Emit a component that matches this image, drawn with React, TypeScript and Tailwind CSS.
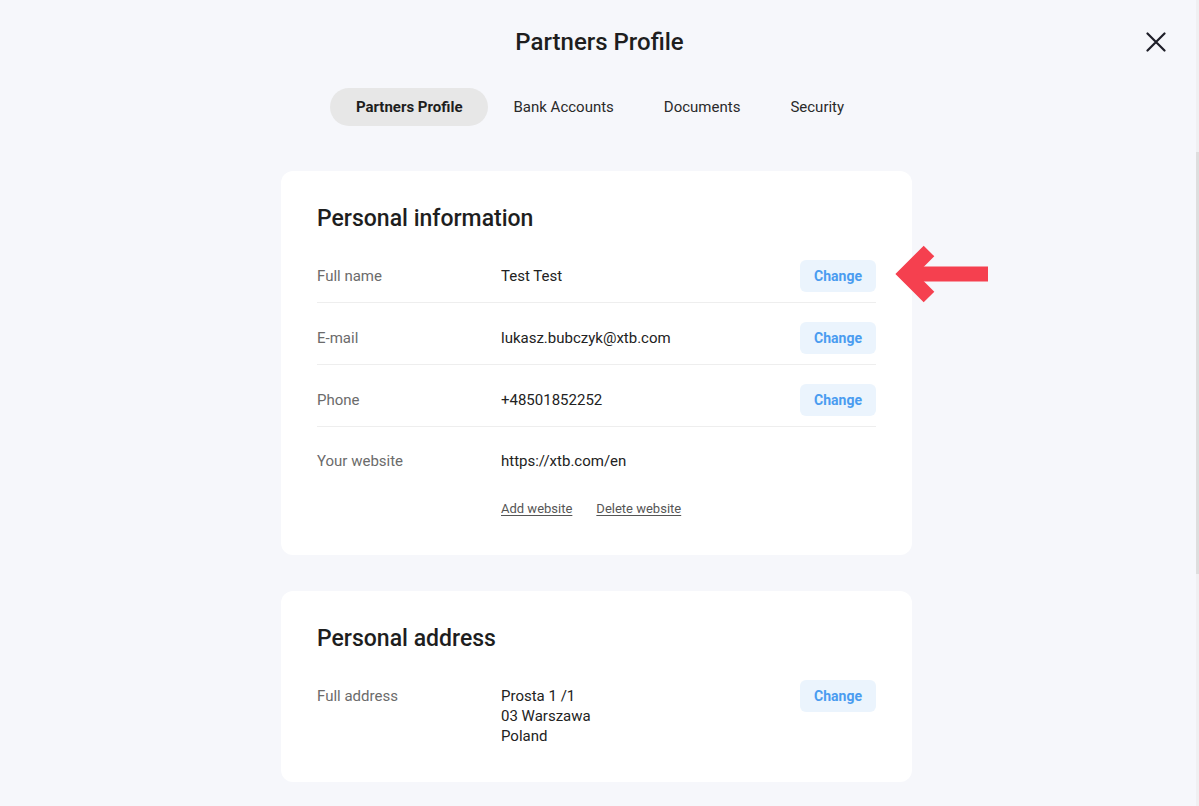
import React from "react";

const font = { fontFamily: "Roboto, 'Noto Sans', sans-serif" };

function ChangeBtn() {
  return (
    <button className="h-[32px] w-[76px] rounded-[6px] bg-[#ebf4fd] text-[14px] font-bold text-[#4a9cf0]">
      Change
    </button>
  );
}

function Row({ label, value, last }: { label: string; value: string; last?: boolean }) {
  return (
    <div className={`flex items-center pt-[19px] pb-[10px] ${last ? "" : "border-b border-[#eeeeee]"}`}>
      <div className="w-[184px] text-[15px] text-[#6b6b6b]">{label}</div>
      <div className="flex-1 text-[15px] text-[#222]">{value}</div>
      <ChangeBtn />
    </div>
  );
}

export default function App() {
  return (
    <div style={font} className="relative h-[806px] w-full overflow-hidden bg-[#f6f7fb]">
      {/* header */}
      <div className="relative flex h-[84px] items-start justify-center pt-[28px]">
        <h1 className="text-[24px] font-medium leading-[28px] text-[#1e1e1e]">Partners Profile</h1>
        <button className="absolute right-[33px] top-[32px] h-[20px] w-[20px]">
          <svg width="20" height="20" viewBox="0 0 20 20">
            <path d="M1.5 1.5 L18.5 18.5 M18.5 1.5 L1.5 18.5" stroke="#1e1e28" strokeWidth="2.2" strokeLinecap="round" />
          </svg>
        </button>
      </div>
      {/* tabs */}
      <div className="mt-[4px] flex justify-center">
        <div className="flex">
          <div className="flex h-[38px] items-center rounded-full bg-[#e7e7e7] px-[26px] text-[15px] font-bold text-[#1e1e1e]">
            Partners Profile
          </div>
          <div className="flex h-[38px] items-center px-[25px] text-[15px] text-[#2a2a2a]">Bank Accounts</div>
          <div className="flex h-[38px] items-center px-[25px] text-[15px] text-[#2a2a2a]">Documents</div>
          <div className="flex h-[38px] items-center px-[25px] text-[15px] text-[#2a2a2a]">Security</div>
        </div>
      </div>
      {/* content */}
      <div className="mt-[45px] flex flex-col items-center pr-[6px]">
        <div className="relative w-[631px] rounded-[12px] bg-white px-[36px] pt-[34px] pb-[38px]">
          <h2 className="text-[23px] font-medium leading-[28px] text-[#1e1e1e]">Personal information</h2>
          <div className="mt-[8px]">
            <Row label="Full name" value="Test Test" />
            <Row label="E-mail" value="lukasz.bubczyk@xtb.com" />
            <Row label="Phone" value="+48501852252" />
            <div className="flex items-center pt-[18px]">
              <div className="w-[184px] text-[15px] leading-[32px] text-[#6b6b6b]">Your website</div>
              <div className="flex-1 text-[15px] leading-[32px] text-[#222]">https://xtb.com/en</div>
            </div>
            <div className="mt-[24px] flex gap-[24px] pl-[184px] text-[13px] leading-[16px] text-[#555]">
              <span className="underline underline-offset-2">Add website</span>
              <span className="underline underline-offset-2">Delete website</span>
            </div>
          </div>
          {/* annotation arrow */}
          <svg className="absolute left-[612px] top-[71px]" width="96" height="64" viewBox="0 0 96 64">
            <path d="M12 32 L95 32" stroke="#f5404f" strokeWidth="15" />
            <path d="M36 9 L13 32 L36 55" fill="none" stroke="#f5404f" strokeWidth="15" strokeLinejoin="miter" strokeLinecap="butt" />
          </svg>
        </div>

        <div className="mt-[36px] w-[631px] rounded-[12px] bg-white px-[36px] pt-[34px] pb-[36px]">
          <h2 className="text-[23px] font-medium leading-[28px] text-[#1e1e1e]">Personal address</h2>
          <div className="mt-[8px] flex items-start pt-[19px]">
            <div className="w-[184px] pt-[6px] text-[15px] leading-[20px] text-[#6b6b6b]">Full address</div>
            <div className="flex-1 pt-[6px] text-[15px] leading-[20px] text-[#222]">
              <div>Prosta 1 /1</div>
              <div>03 Warszawa</div>
              <div>Poland</div>
            </div>
            <ChangeBtn />
          </div>
        </div>
      </div>
      {/* scrollbar */}
      <div className="absolute right-0 top-0 h-full w-[3px] bg-[#f0f0f2]">
        <div className="mt-[152px] h-[422px] w-full bg-[#dedede]" />
      </div>
    </div>
  );
}
